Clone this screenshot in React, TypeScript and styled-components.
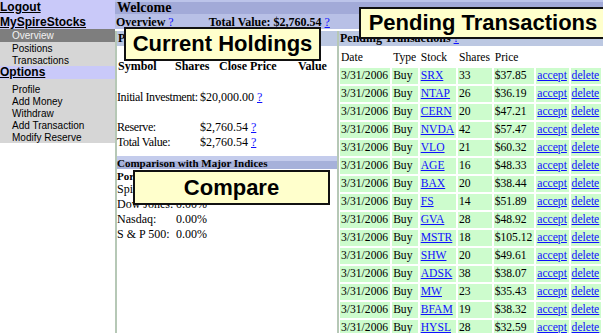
import React from 'react'
import styled, { createGlobalStyle } from 'styled-components'

const GlobalStyle = createGlobalStyle`
  html, body {
    margin: 0;
    padding: 0;
    overflow: hidden;
    background: #fff;
  }
  body {
    font-family: 'Liberation Serif', 'Times New Roman', serif;
    font-size: 12px;
    color: #000;
  }
`

const Page = styled.div`
  position: relative;
  display: flex;
  width: 603px;
  height: 333px;
  overflow: hidden;
`

/* ---------- sidebar ---------- */

const Sidebar = styled.nav`
  flex: none;
  width: 115px;
  align-self: flex-start;
  font-family: 'Liberation Sans', Arial, sans-serif;
`

const NavHeading = styled.a<{ $h: number }>`
  display: block;
  height: ${(p) => p.$h}px;
  line-height: ${(p) => p.$h}px;
  background: #c9c9f9;
  font-size: 12px;
  font-weight: bold;
  color: #000;
  text-decoration: underline;
`

const NavList = styled.ul<{ $pad?: number }>`
  margin: 0;
  padding: ${(p) => p.$pad ?? 0}px 0 0;
  list-style: none;
  background: #d6d6d6;
`

const NavItem = styled.li<{ $active?: boolean }>`
  height: ${(p) => (p.$active ? 13 : 12)}px;
  line-height: ${(p) => (p.$active ? 14 : 13)}px;
  padding-left: 12px;
  font-size: 10px;
  background: ${(p) => (p.$active ? '#7e7e7e' : 'transparent')};
  color: ${(p) => (p.$active ? '#f2f2f2' : '#000')};
`

/* ---------- main ---------- */

const Main = styled.main`
  flex: 1;
  min-width: 0;
  display: flex;
  flex-direction: column;
`

const WelcomeBar = styled.div`
  height: 12px;
  line-height: 12px;
  border-top: 2px solid #bcc4ea;
  padding-left: 2px;
  background: #a2aad8;
  font-size: 14px;
  font-weight: bold;
`

const OverviewBar = styled.div`
  display: flex;
  height: 15px;
  line-height: 16px;
  padding-left: 1px;
  background: #b8c0e6;
  font-weight: bold;
  white-space: nowrap;
`

const TotalValue = styled.span`
  margin-left: 35px;
`

const Help = styled.a`
  color: #1010ff;
  font-weight: normal;
  text-decoration: underline;
`

const Panels = styled.div`
  flex: 1;
  display: flex;
  margin-top: 2px;
  min-height: 0;
`

const Panel = styled.section<{ $w?: number }>`
  box-sizing: border-box;
  ${(p) => (p.$w ? `width: ${p.$w}px; flex: none;` : 'flex: 1; min-width: 0;')}
  border-left: 2px solid #b6c8b6;
  display: flex;
  flex-direction: column;
`

const PanelHeader = styled.div`
  height: 15px;
  line-height: 15px;
  padding-left: 1px;
  background: #bcc8e2;
  font-weight: bold;
  white-space: nowrap;
`

const HoldingsHead = styled.div`
  display: grid;
  grid-template-columns: 57px 44px 79px auto;
  margin-top: 13px;
  padding-left: 1px;
  line-height: 15px;
  font-weight: bold;
  white-space: nowrap;
`

const InfoGrid = styled.div<{ $col: number; $top: number }>`
  display: grid;
  grid-template-columns: ${(p) => p.$col}px auto;
  margin-top: ${(p) => p.$top}px;
  line-height: 15px;
  white-space: nowrap;
`

const Label = styled.span`
  letter-spacing: -0.4px;
`

const Blank = styled.div`
  grid-column: 1 / -1;
  height: 15px;
`

const CompareHeader = styled.div`
  margin-top: 6px;
  height: 13px;
  line-height: 14px;
  background: linear-gradient(#c4ccec 0 35%, #a6b1da 35% 100%);
  font-size: 11px;
  font-weight: bold;
  white-space: nowrap;
`

const SubHead = styled.div`
  height: 13px;
  line-height: 14px;
  font-size: 11px;
  font-weight: bold;
  white-space: nowrap;
`

/* ---------- pending table ---------- */

const TxTable = styled.table`
  margin: 2px 0 0 -1px;
  border-spacing: 2px;
  white-space: nowrap;
  font-size: 11.6px;
  line-height: 14px;
  td,
  th {
    padding: 1px;
    text-align: left;
    font-weight: normal;
  }
`

const Cell = styled.td`
  background: #cdfccd;
`

const Link = styled.a`
  color: #1010ff;
  text-decoration: underline;
`

/* ---------- callouts ---------- */

const Callout = styled.div<{ $x: number; $y: number; $w: number; $h: number }>`
  position: absolute;
  left: ${(p) => p.$x}px;
  top: ${(p) => p.$y}px;
  width: ${(p) => p.$w}px;
  height: ${(p) => p.$h}px;
  box-sizing: border-box;
  display: flex;
  align-items: center;
  justify-content: center;
  background: #ffffcc;
  border: 2px solid #111;
  font-family: 'Liberation Sans', Arial, sans-serif;
  font-size: 22px;
  font-weight: bold;
  white-space: nowrap;
`

const pending = [
  ['SRX', '33', '$37.85'],
  ['NTAP', '26', '$36.19'],
  ['CERN', '20', '$47.21'],
  ['NVDA', '42', '$57.47'],
  ['VLO', '21', '$60.32'],
  ['AGE', '16', '$48.33'],
  ['BAX', '20', '$38.44'],
  ['FS', '14', '$51.89'],
  ['GVA', '28', '$48.92'],
  ['MSTR', '18', '$105.12'],
  ['SHW', '20', '$49.61'],
  ['ADSK', '38', '$38.07'],
  ['MW', '23', '$35.43'],
  ['BFAM', '19', '$38.32'],
  ['HYSL', '28', '$32.59'],
]

const indices = [
  ['Spire:', '0.00%'],
  ['Dow Jones:', '0.00%'],
  ['Nasdaq:', '0.00%'],
  ['S & P 500:', '0.00%'],
]

export default function App() {
  return (
    <Page>
      <GlobalStyle />
      <Sidebar>
        <NavHeading $h={15}>Logout</NavHeading>
        <NavHeading $h={14}>MySpireStocks</NavHeading>
        <NavList>
          <NavItem $active>Overview</NavItem>
          <NavItem>Positions</NavItem>
          <NavItem>Transactions</NavItem>
        </NavList>
        <NavHeading $h={13}>Options</NavHeading>
        <NavList $pad={4}>
          <NavItem>Profile</NavItem>
          <NavItem>Add Money</NavItem>
          <NavItem>Withdraw</NavItem>
          <NavItem>Add Transaction</NavItem>
          <NavItem>Modify Reserve</NavItem>
        </NavList>
      </Sidebar>

      <Main>
        <WelcomeBar>Welcome</WelcomeBar>
        <OverviewBar>
          <span>
            Overview <Help>?</Help>
          </span>
          <TotalValue>
            Total Value: $2,760.54 <Help>?</Help>
          </TotalValue>
        </OverviewBar>

        <Panels>
          <Panel $w={222}>
            <PanelHeader>
              Positions <Help>?</Help>
            </PanelHeader>
            <HoldingsHead>
              <span>Symbol</span>
              <span>Shares</span>
              <span>Close Price</span>
              <span>Value</span>
            </HoldingsHead>
            <InfoGrid $col={83} $top={16}>
              <Label>Initial Investment:</Label>
              <span>
                $20,000.00 <Help>?</Help>
              </span>
              <Blank />
              <Label>Reserve:</Label>
              <span>
                $2,760.54 <Help>?</Help>
              </span>
              <Label>Total Value:</Label>
              <span>
                $2,760.54 <Help>?</Help>
              </span>
            </InfoGrid>
            <CompareHeader>Comparison with Major Indices</CompareHeader>
            <SubHead>Portfolio Performance</SubHead>
            <InfoGrid $col={59} $top={0}>
              {indices.map(([label, value]) => (
                <React.Fragment key={label}>
                  <span>{label}</span>
                  <span>{value}</span>
                </React.Fragment>
              ))}
            </InfoGrid>
          </Panel>

          <Panel>
            <PanelHeader>
              Pending Transactions <Help>?</Help>
            </PanelHeader>
            <TxTable>
              <thead>
                <tr>
                  <th>Date</th>
                  <th>Type</th>
                  <th>Stock</th>
                  <th>Shares</th>
                  <th>Price</th>
                  <th />
                  <th />
                </tr>
              </thead>
              <tbody>
                {pending.map(([sym, shares, price]) => (
                  <tr key={sym}>
                    <Cell>3/31/2006</Cell>
                    <Cell>Buy</Cell>
                    <Cell>
                      <Link>{sym}</Link>
                    </Cell>
                    <Cell>{shares}</Cell>
                    <Cell>{price}</Cell>
                    <Cell>
                      <Link>accept</Link>
                    </Cell>
                    <Cell>
                      <Link>delete</Link>
                    </Cell>
                  </tr>
                ))}
              </tbody>
            </TxTable>
          </Panel>
        </Panels>
      </Main>

      <Callout $x={124} $y={27} $w={197} $h={34}>
        Current Holdings
      </Callout>
      <Callout $x={359} $y={7} $w={248} $h={32}>
        Pending Transactions
      </Callout>
      <Callout $x={133} $y={170} $w={197} $h={35}>
        Compare
      </Callout>
    </Page>
  )
}
